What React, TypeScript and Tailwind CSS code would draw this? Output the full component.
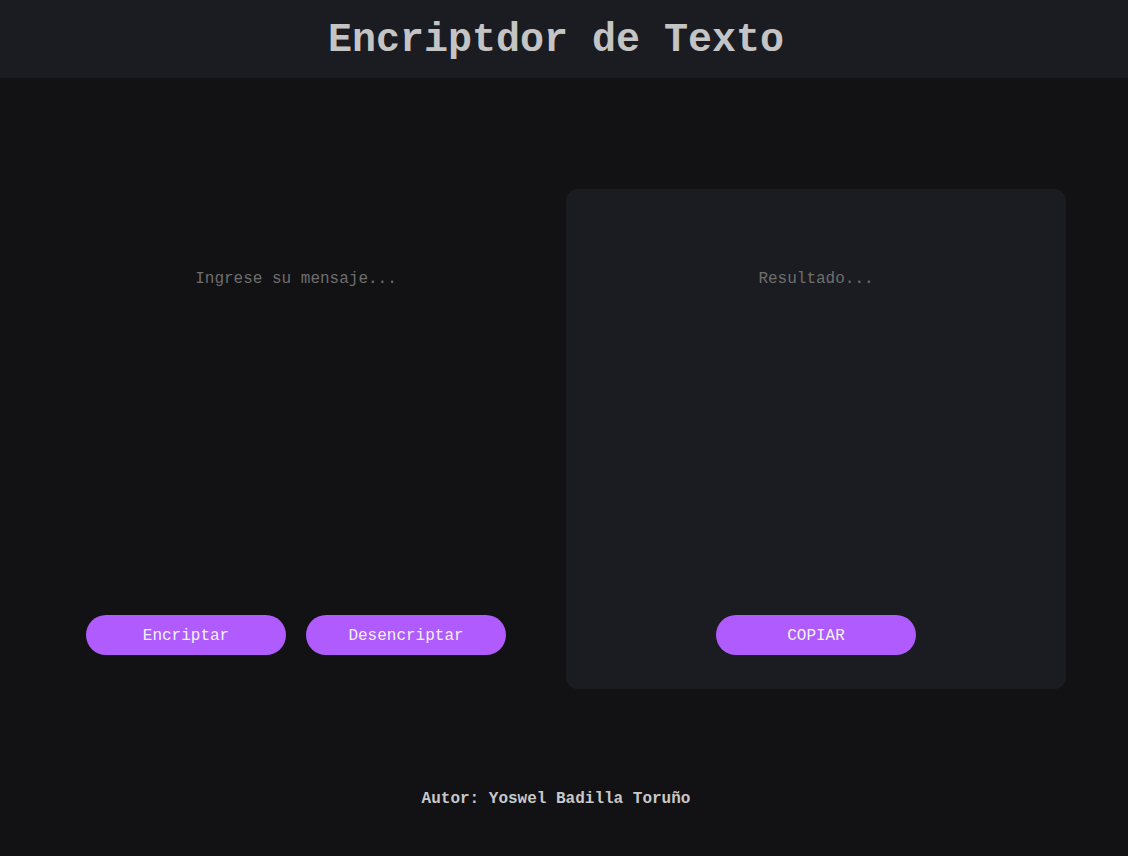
export default function App() {
  return (
    <div className="min-h-[856px] bg-[#121214] font-['Courier_New','Nimbus_Mono_PS','FreeMono','Liberation_Mono',monospace]">
      <header className="flex h-[78px] items-center justify-center bg-[#1b1c21] pr-[16px] pt-[3px]">
        <h1 className="text-[40px] font-bold leading-none text-[#c4c4c4]">Encriptdor de Texto</h1>
      </header>

      <main className="flex justify-center gap-5 pr-[16px] pt-[111px]">
        <section className="flex h-[500px] w-[500px] flex-col">
          <textarea
            className="flex-1 resize-none bg-transparent px-10 pt-[81px] text-center text-base leading-[18px] text-[#d0d0d0] outline-none placeholder:text-[#6e6e6e]"
            placeholder="Ingrese su mensaje..."
          />
          <div className="flex justify-center gap-5 pb-[34px]">
            <button className="h-10 w-[200px] rounded-full bg-[#b05bfd] pt-px text-base text-[#f2f2f2]">Encriptar</button>
            <button className="h-10 w-[200px] rounded-full bg-[#b05bfd] pt-px text-base text-[#f2f2f2]">Desencriptar</button>
          </div>
        </section>

        <section className="flex h-[500px] w-[500px] flex-col rounded-xl bg-[#1b1c21]">
          <textarea
            readOnly
            className="flex-1 resize-none bg-transparent px-10 pt-[81px] text-center text-base leading-[18px] text-[#d0d0d0] outline-none placeholder:text-[#6e6e6e]"
            placeholder="Resultado..."
          />
          <div className="flex justify-center pb-[34px]">
            <button className="h-10 w-[200px] rounded-full bg-[#b05bfd] pt-px text-base text-[#f2f2f2]">COPIAR</button>
          </div>
        </section>
      </main>

      <footer className="mt-[98px] pr-[16px] text-center text-base font-bold leading-6 text-[#c8c8c8]">
        Autor: Yoswel Badilla Toruño
      </footer>
    </div>
  );
}
